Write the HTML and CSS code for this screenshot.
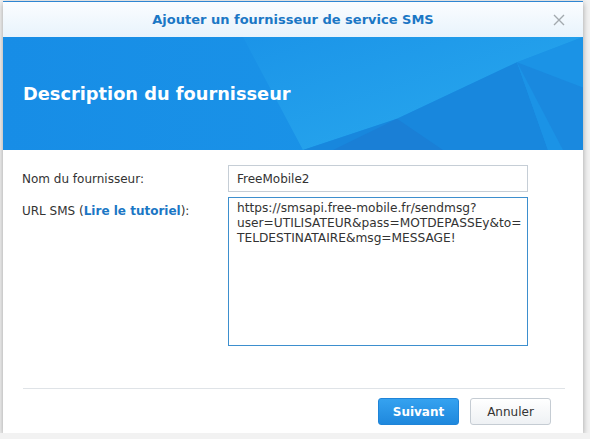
FILE: index.html
```html
<!DOCTYPE html>
<html lang="fr">

<head>
    <meta charset="UTF-8">
    <meta name="viewport" content="width=device-width, initial-scale=1.0">
    <title>Ajouter un fournisseur de service SMS</title>
    <link rel="stylesheet" href="styles.css">
</head>

<body>
    <div class="dialog">
        <div class="title-bar">
            <span class="title">Ajouter un fournisseur de service SMS</span>
            <svg class="close" viewBox="0 0 12 12" width="12" height="12">
                <path d="M1 1L11 11M11 1L1 11" stroke="#a3a9ae" stroke-width="1.4" fill="none" />
            </svg>
        </div>

        <div class="banner">
            <svg class="banner-art" viewBox="0 0 580 112" preserveAspectRatio="none">
                <defs>
                    <linearGradient id="base" x1="0" y1="0" x2="1" y2="0">
                        <stop offset="0" stop-color="#178de6" />
                        <stop offset="1" stop-color="#1c96e8" />
                    </linearGradient>
                    <linearGradient id="light" x1="0" y1="0" x2="1" y2="1">
                        <stop offset="0" stop-color="#1b94e8" />
                        <stop offset="1" stop-color="#2aaaee" />
                    </linearGradient>
                </defs>
                <rect width="580" height="112" fill="url(#base)" />
                <polygon points="240,0 580,0 514,25 394,81 300,112" fill="url(#light)" />
                <polygon points="300,112 394,81 514,25 545,112" fill="#1887dd" />
                <polygon points="394,81 440,112 330,112" fill="#1a7fd6" />
                <polygon points="514,25 580,0 580,112 545,112" fill="#1b93e6" />
                <polygon points="514,25 580,50 580,112 560,112" fill="#1a89df" />
            </svg>
            <h2>Description du fournisseur</h2>
        </div>

        <form class="content">
            <label for="providerName">Nom du fournisseur:</label>
            <input type="text" id="providerName" value="FreeMobile2">

            <label for="smsUrl">URL SMS (<a href="#">Lire le tutoriel</a>):</label>
            <textarea id="smsUrl">https://smsapi.free-mobile.fr/sendmsg?
user=UTILISATEUR&amp;pass=MOTDEPASSEy&amp;to=
TELDESTINATAIRE&amp;msg=MESSAGE!</textarea>
        </form>

        <div class="footer">
            <button class="btn primary">Suivant</button>
            <button class="btn">Annuler</button>
        </div>
    </div>
</body>

</html>
```

FILE: styles.css
```css
body {
    margin: 0;
    background-color: #f2f2f2;
    font-family: "DejaVu Sans", Verdana, sans-serif;
    font-size: 12px;
    color: #333;
}

.dialog {
    margin: 1px 0 0 3px;
    width: 580px;
    height: 431px;
    background-color: #fff;
    border-top: 1px solid #2f86d2;
    box-shadow: 0 2px 6px rgba(0, 0, 0, 0.35);
    display: flex;
    flex-direction: column;
}

.title-bar {
    height: 35px;
    display: flex;
    align-items: center;
    justify-content: center;
    background: linear-gradient(#fbfdff, #e8f3fc);
    position: relative;
}

.title {
    font-weight: bold;
    font-size: 13px;
    color: #1b77c5;
}

.close {
    position: absolute;
    right: 18px;
    top: 12px;
}

.banner {
    height: 113px;
    display: grid;
    background-color: #178de6;
}

.banner-art {
    grid-area: 1 / 1;
    width: 100%;
    height: 100%;
}

.banner h2 {
    grid-area: 1 / 1;
    align-self: center;
    margin: 0 0 0 20px;
    color: #fff;
    font-size: 17.8px;
    font-weight: bold;
}

.content {
    display: grid;
    grid-template-columns: 206px 300px;
    row-gap: 5px;
    padding: 15px 0 0 19px;
    flex: 1;
    align-content: start;
}

.content label {
    padding-top: 7px;
}

.content a {
    color: #1b77c5;
    font-weight: bold;
    text-decoration: none;
}

input[type="text"],
textarea {
    font-family: inherit;
    font-size: 12px;
    color: #333;
    box-sizing: border-box;
    border: 1px solid #c6ced6;
    padding: 5px 8px;
    margin: 0;
}

input[type="text"] {
    height: 27px;
}

textarea {
    height: 149px;
    font-size: 12.2px;
    border-color: #3d8fce;
    resize: none;
    line-height: 15px;
    padding-top: 3px;
    white-space: pre;
    overflow: hidden;
}

.footer {
    margin: 0 18px 0 20px;
    border-top: 1px solid #dfe3e7;
    padding: 9px 14px 8px 0;
    display: flex;
    justify-content: flex-end;
    gap: 11px;
}

.btn {
    width: 81px;
    height: 27px;
    font-family: inherit;
    font-size: 12px;
    color: #333;
    background: linear-gradient(#ffffff, #eef1f4);
    border: 1px solid #c5ccd3;
    border-radius: 3px;
}

.btn.primary {
    color: #fff;
    font-weight: bold;
    background: linear-gradient(#35a2f0, #1f88dd);
    border-color: #1f84d8;
}
```
